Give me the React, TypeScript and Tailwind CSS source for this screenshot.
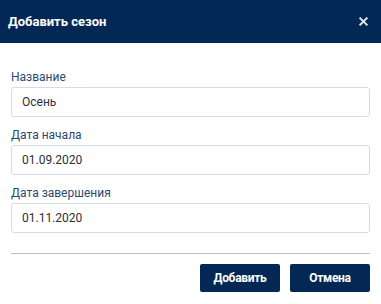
import React from 'react';

const fields = [
  { label: 'Название', value: 'Осень' },
  { label: 'Дата начала', value: '01.09.2020' },
  { label: 'Дата завершения', value: '01.11.2020' },
];

export default function App() {
  return (
    <div className="w-[381px] h-[304px] bg-white font-['Roboto',sans-serif] overflow-hidden">
      {/* Header */}
      <div className="h-[43px] bg-[#032855] flex items-center justify-between pl-[8px] pr-[13px]">
        <span className="text-white text-[13px] font-bold">Добавить сезон</span>
        <svg width="9" height="9" viewBox="0 0 10 10" className="text-[#dfe4ea]">
          <path d="M1.5 1.5 L8.5 8.5 M8.5 1.5 L1.5 8.5" stroke="currentColor" strokeWidth="2.2" strokeLinecap="square" />
        </svg>
      </div>

      {/* Form */}
      <div className="px-[11px] pt-[26px]">
        <div className="flex flex-col gap-[10px]">
          {fields.map((f) => (
            <div key={f.label}>
              <div className="text-[12px] leading-[16px] text-[#2a4a72] mb-[2px]">{f.label}</div>
              <div className="h-[30px] border border-[#d6dce2] rounded-[3px] flex items-center px-[10px] text-[12px] text-[#2b2f36]">
                {f.value}
              </div>
            </div>
          ))}
        </div>

        <div className="mt-[20px] border-t border-[#b9c4cc]" />

        <div className="flex justify-end gap-[10px] mt-[10px]">
          <button className="w-[80px] h-[28px] bg-[#032855] rounded-[2px] text-white text-[12px] font-bold tracking-[-0.3px]">
            Добавить
          </button>
          <button className="w-[80px] h-[28px] bg-[#032855] rounded-[2px] text-white text-[12px] font-bold tracking-[-0.3px]">
            Отмена
          </button>
        </div>
      </div>
    </div>
  );
}
